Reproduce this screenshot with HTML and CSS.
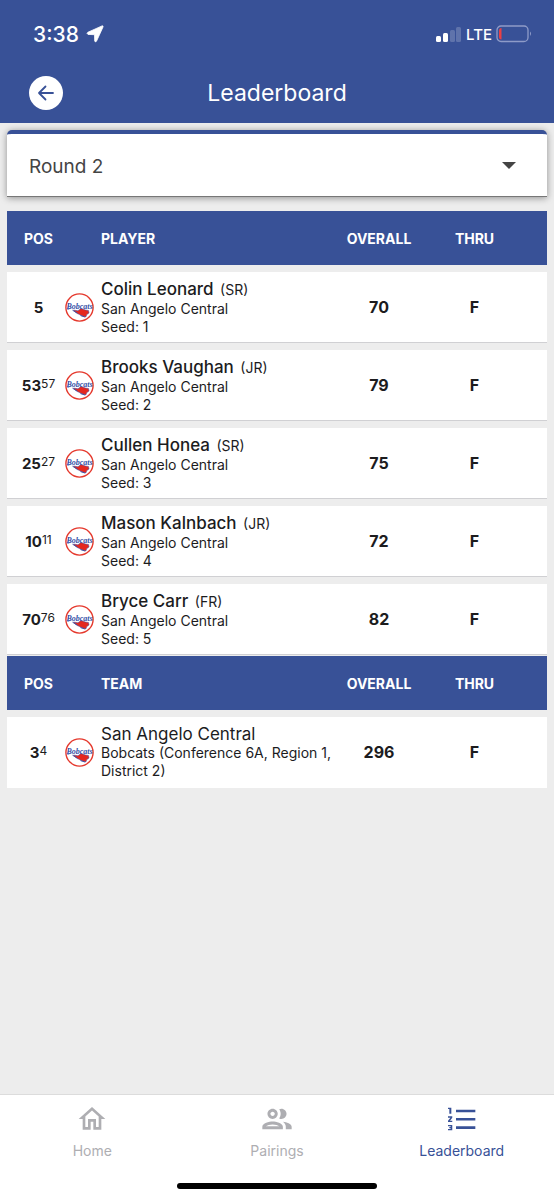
FILE: index.html
```
<!DOCTYPE html>
<html lang="en">
<head>
    <meta charset="UTF-8">
    <meta name="viewport" content="width=device-width, initial-scale=1.0">
    <title>Leaderboard</title>
    <link rel="stylesheet" href="styles.css">
</head>
<body>

    <svg class="defs" aria-hidden="true">
        <symbol id="bobcats" viewBox="0 0 29 29">
            <circle cx="14.5" cy="14.5" r="13.6" fill="#fff" stroke="#e5382c" stroke-width="1.4"/>
            <path d="M8.500 17 L13 17.800 L16 15.500 L20.500 17 L23.500 17.500 L24 20 L21.800 21.600 L20.800 24 L17 22.800 L12.500 20.600 L10 18.800 Z" fill="#e5281f" stroke="#3b479c" stroke-width=".5"/>
            <path d="M7.500 17.200 L12.500 20.300 M15.500 22.600 L20 24" stroke="#3b479c" stroke-width=".9"/>
            <path d="M2.500 17 Q3.500 15.500 5 15.500" fill="none" stroke="#3450a8" stroke-width=".8"/>
        </symbol>
    </svg>

    <header class="header">
        <div class="status-bar">
            <div class="status-left">
                <span class="time">3:38</span>
                <svg width="18" height="18" viewBox="0 0 18 18"><path d="M16 .9 Q17.500 .5 17 2 L10.500 16.200 Q9.300 17.700 8.700 16 L8.500 9.700 L2 9.400 Q.2 8.500 1.800 7.300 Z" fill="#fff" stroke="#fff" stroke-width=".8"/></svg>
            </div>
            <div class="status-right">
                <svg width="26" height="16" viewBox="0 0 26 16" fill="#fff">
                    <rect x="0" y="10" width="5" height="6" rx="1.500"/>
                    <rect x="7" y="7" width="5" height="9" rx="1.500"/>
                    <rect x="14" y="4" width="5" height="12" rx="1.500" opacity=".2"/>
                    <rect x="20" y="1" width="5" height="15" rx="1.500" opacity=".2"/>
                </svg>
                <span class="network">LTE</span>
                <svg width="36" height="18" viewBox="0 0 36 18">
                    <rect x="1" y="1" width="31" height="15.500" rx="4" fill="none" stroke="#8e9bc8" stroke-width="1.300"/>
                    <path d="M5.500 3 Q3 3 3 5.500 V12 Q3 14.500 5.500 14.500 Z" fill="#eb4044"/>
                    <path d="M34 6.500 Q36 8.700 34 11 Z" fill="#8e9bc8"/>
                </svg>
            </div>
        </div>
        <div class="title-bar">
            <button class="back-btn" aria-label="Back">
                <svg width="18" height="18" viewBox="0 0 18 18" fill="none" stroke="#385197" stroke-width="1.800" stroke-linecap="round" stroke-linejoin="round"><path d="M16 9 H2 M8.500 2.500 L2 9 L8.500 15.500"/></svg>
            </button>
            <h1>Leaderboard</h1>
        </div>
    </header>

    <main class="content">
        <div class="round-picker">
            <select id="round" aria-label="Round">
                <option>Round 1</option>
                <option selected>Round 2</option>
            </select>
            <svg class="caret" width="14" height="7" viewBox="0 0 14 7"><path d="M0 0 H14 L7 7 Z" fill="#444"/></svg>
        </div>

        <table class="board">
            <colgroup><col class="col-pos"><col class="col-logo"><col><col class="col-overall"><col class="col-thru"></colgroup>
            <thead>
                <tr><th class="pos">POS</th><th class="name" colspan="2">PLAYER</th><th>OVERALL</th><th class="thru">THRU</th></tr>
            </thead>
            <tbody>
                <tr>
                    <td class="pos">5</td>
                    <td class="logo"><svg viewBox="0 0 29 29"><use href="#bobcats"/><text x="14.500" y="15.500">Bobcats</text></svg></td>
                    <td class="info"><div class="player">Colin Leonard <span>(SR)</span></div><div>San Angelo Central</div><div>Seed: 1</div></td>
                    <td>70</td>
                    <td class="thru">F</td>
                </tr>
                <tr>
                    <td class="pos">53<sup>57</sup></td>
                    <td class="logo"><svg viewBox="0 0 29 29"><use href="#bobcats"/><text x="14.500" y="15.500">Bobcats</text></svg></td>
                    <td class="info"><div class="player">Brooks Vaughan <span>(JR)</span></div><div>San Angelo Central</div><div>Seed: 2</div></td>
                    <td>79</td>
                    <td class="thru">F</td>
                </tr>
                <tr>
                    <td class="pos">25<sup>27</sup></td>
                    <td class="logo"><svg viewBox="0 0 29 29"><use href="#bobcats"/><text x="14.500" y="15.500">Bobcats</text></svg></td>
                    <td class="info"><div class="player">Cullen Honea <span>(SR)</span></div><div>San Angelo Central</div><div>Seed: 3</div></td>
                    <td>75</td>
                    <td class="thru">F</td>
                </tr>
                <tr>
                    <td class="pos">10<sup>11</sup></td>
                    <td class="logo"><svg viewBox="0 0 29 29"><use href="#bobcats"/><text x="14.500" y="15.500">Bobcats</text></svg></td>
                    <td class="info"><div class="player">Mason Kalnbach <span>(JR)</span></div><div>San Angelo Central</div><div>Seed: 4</div></td>
                    <td>72</td>
                    <td class="thru">F</td>
                </tr>
                <tr>
                    <td class="pos">70<sup>76</sup></td>
                    <td class="logo"><svg viewBox="0 0 29 29"><use href="#bobcats"/><text x="14.500" y="15.500">Bobcats</text></svg></td>
                    <td class="info"><div class="player">Bryce Carr <span>(FR)</span></div><div>San Angelo Central</div><div>Seed: 5</div></td>
                    <td>82</td>
                    <td class="thru">F</td>
                </tr>
            </tbody>
        </table>

        <table class="board teams">
            <colgroup><col class="col-pos"><col class="col-logo"><col><col class="col-overall"><col class="col-thru"></colgroup>
            <thead>
                <tr><th class="pos">POS</th><th class="name" colspan="2">TEAM</th><th>OVERALL</th><th class="thru">THRU</th></tr>
            </thead>
            <tbody>
                <tr>
                    <td class="pos">3<sup>4</sup></td>
                    <td class="logo"><svg viewBox="0 0 29 29"><use href="#bobcats"/><text x="14.500" y="15.500">Bobcats</text></svg></td>
                    <td class="info"><div class="team">San Angelo Central</div><div>Bobcats (Conference 6A, Region 1, District 2)</div></td>
                    <td>296</td>
                    <td class="thru">F</td>
                </tr>
            </tbody>
        </table>
    </main>

    <footer class="footer">
        <nav class="tabs">
            <a href="#home">
                <svg width="32" height="32" viewBox="0 0 24 24"><path d="M12 5.690l5 4.500V18h-2v-6H9v6H7v-7.810l5-4.500M12 3L2 12h3v8h6v-6h2v6h6v-8h3L12 3z"/></svg>
                Home
            </a>
            <a href="#pairings">
                <svg width="34" height="32" viewBox="0 0 24 24"><path d="M9 13.750c-2.340 0-7 1.170-7 3.500V19h14v-1.750c0-2.330-4.660-3.500-7-3.500zM4.340 17c.84-.58 2.870-1.250 4.660-1.250s3.820.67 4.660 1.250H4.340zM9 12c1.930 0 3.500-1.570 3.500-3.500S10.930 5 9 5 5.500 6.570 5.500 8.500 7.070 12 9 12zm0-5c.83 0 1.500.67 1.500 1.500S9.830 10 9 10s-1.500-.67-1.500-1.500S8.170 7 9 7zm7.040 6.810c1.160.84 1.960 1.960 1.960 3.440V19h4v-1.750c0-2.020-3.500-3.170-5.960-3.440zM15 12c1.930 0 3.500-1.570 3.500-3.500S16.930 5 15 5c-.54 0-1.040.13-1.500.35.63.89 1 1.980 1 3.150s-.37 2.260-1 3.150c.46.22.96.35 1.500.35z" transform="translate(-1.200 -1.200) scale(1.100)"/></svg>
                Pairings
            </a>
            <a href="#leaderboard" class="active">
                <svg width="32" height="32" viewBox="0 0 24 24"><path d="M1.500 17.500h2v.5H2.500v1h1v.5h-2v1h3.200v-4H1.500v1zm1-9.500H4V3.500H1.500v1h1V8zm-1 3h1.800L1.500 13.300v1h3.200v-1H3l1.700-2.300v-1H1.500v1zM7.500 5v2h14.500V5H7.500zm0 14.500h14.500v-2H7.500v2zm0-6.300h14.500v-2H7.500v2z"/></svg>
                Leaderboard
            </a>
        </nav>
        <div class="home-indicator"></div>
    </footer>

</body>
</html>
```
FILE: styles.css
```
* { margin: 0; padding: 0; box-sizing: border-box; }
body { background: #ededed; color: #1c1c1e; font-family: Inter, "Liberation Sans", sans-serif; min-height: 100vh; display: flex; flex-direction: column; }
.defs { position: absolute; width: 0; height: 0; }

.header { background: #385197; color: white; height: 123px; padding-top: 20px; }
.status-bar { display: flex; justify-content: space-between; align-items: center; height: 28px; padding: 0 22px 0 33px; }
.status-left { display: flex; align-items: center; gap: 7px; }
.status-right { display: flex; align-items: center; gap: 4px; }
.time { font-size: 21px; font-weight: 500; }
.network { font-size: 15px; font-weight: 500; }
.title-bar { position: relative; display: flex; justify-content: center; align-items: center; height: 34px; margin-top: 28px; }
.title-bar h1 { font-size: 23px; font-weight: 400; }
.back-btn { position: absolute; left: 29px; width: 34px; height: 34px; border: none; border-radius: 50%; background: white; display: flex; justify-content: center; align-items: center; cursor: pointer; }

.content { flex: 1; padding: 7px 7px 20px; }
.round-picker { position: relative; margin-bottom: 14px; }
.round-picker select { appearance: none; display: block; width: 100%; height: 67px; padding: 3px 22px 0; background: white; color: #444; font-family: inherit; font-size: 19px; border: none; border-top: 4px solid #385197; border-bottom: 1px solid #777; border-radius: 5px 5px 0 0; box-shadow: 0 1px 7px rgba(0, 0, 0, 0.4); }
.caret { position: absolute; right: 31px; top: 32px; pointer-events: none; }

.board { width: 100%; table-layout: fixed; border-collapse: separate; border-spacing: 0; }
.teams { margin-top: 1px; }
.col-pos { width: 58px; }
.col-logo { width: 36px; }
.col-overall { width: 76px; }
.col-thru { width: 130px; }
.board th { height: 54px; background: #385197; color: white; font-size: 14px; font-weight: 700; }
.board td { height: 78px; background: white; border-top: 7px solid #ededed; border-bottom: 1px solid #d0d0d3; font-size: 16px; font-weight: 700; text-align: center; vertical-align: middle; }
.board .pos { padding-left: 5px; font-size: 15px; }
.board th.pos { font-size: 14px; }
.board .thru { padding-right: 15px; }
.board th.name { padding-left: 36px; text-align: left; }
.board .info { font-size: 14px; font-weight: 400; line-height: 18px; text-align: left; }
.board sup { font-size: 12px; font-weight: 400; line-height: 0; vertical-align: 3px; }
.teams td { border-bottom-color: white; }
.logo svg { display: block; width: 29px; height: 29px; overflow: visible; }
.logo text { font-family: "Liberation Serif", serif; font-size: 8px; font-style: italic; font-weight: 700; fill: #3450a8; text-anchor: middle; }
.player, .team { font-size: 17px; line-height: 20px; }
.player { font-weight: 500; }
.player span { font-size: 14px; font-weight: 400; margin-left: 2px; }

.footer { background: white; border-top: 1px solid #dcdcdc; height: 106px; }
.tabs { display: flex; justify-content: space-around; height: 91px; }
.tabs a { flex: 1; display: flex; flex-direction: column; align-items: center; padding-top: 8px; color: #aeaeb2; font-size: 14px; line-height: 32px; text-decoration: none; }
.tabs svg { fill: currentColor; }
.tabs .active { color: #385197; }
.home-indicator { width: 36%; height: 6px; margin: -3px auto 0; border-radius: 3px; background: black; }
```
